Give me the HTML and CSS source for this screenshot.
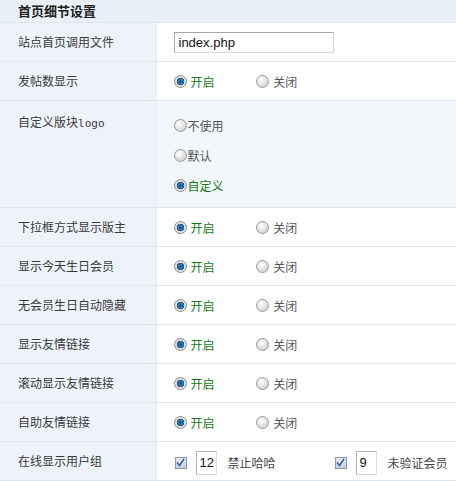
FILE: index.html
```html
<!DOCTYPE html>
<html>
<head>
  <meta charset="UTF-8">
  <title>首页细节设置</title>
  <link rel="stylesheet" href="styles.css">
</head>
<body>

<table class="settings">
  <colgroup>
    <col class="col-label">
    <col>
  </colgroup>
  <tr class="head">
    <th colspan="2">首页细节设置</th>
  </tr>
  <tr>
    <td class="label">站点首页调用文件</td>
    <td class="value"><input type="text" class="txt" value="index.php"></td>
  </tr>
  <tr>
    <td class="label">发帖数显示</td>
    <td class="value">
      <label class="opt on"><span class="radio checked"></span>开启</label>
      <label class="opt"><span class="radio"></span>关闭</label>
    </td>
  </tr>
  <tr class="tall">
    <td class="label top">自定义版块<span class="mono">logo</span></td>
    <td class="value shade">
      <label class="line"><span class="radio"></span>不使用</label>
      <label class="line"><span class="radio"></span>默认</label>
      <label class="line on"><span class="radio checked"></span>自定义</label>
    </td>
  </tr>
  <tr>
    <td class="label">下拉框方式显示版主</td>
    <td class="value">
      <label class="opt on"><span class="radio checked"></span>开启</label>
      <label class="opt"><span class="radio"></span>关闭</label>
    </td>
  </tr>
  <tr>
    <td class="label">显示今天生日会员</td>
    <td class="value">
      <label class="opt on"><span class="radio checked"></span>开启</label>
      <label class="opt"><span class="radio"></span>关闭</label>
    </td>
  </tr>
  <tr>
    <td class="label">无会员生日自动隐藏</td>
    <td class="value">
      <label class="opt on"><span class="radio checked"></span>开启</label>
      <label class="opt"><span class="radio"></span>关闭</label>
    </td>
  </tr>
  <tr>
    <td class="label">显示友情链接</td>
    <td class="value">
      <label class="opt on"><span class="radio checked"></span>开启</label>
      <label class="opt"><span class="radio"></span>关闭</label>
    </td>
  </tr>
  <tr>
    <td class="label">滚动显示友情链接</td>
    <td class="value">
      <label class="opt on"><span class="radio checked"></span>开启</label>
      <label class="opt"><span class="radio"></span>关闭</label>
    </td>
  </tr>
  <tr>
    <td class="label">自助友情链接</td>
    <td class="value">
      <label class="opt on"><span class="radio checked"></span>开启</label>
      <label class="opt"><span class="radio"></span>关闭</label>
    </td>
  </tr>
  <tr>
    <td class="label">在线显示用户组</td>
    <td class="value">
      <div class="groups">
        <span class="group">
          <span class="check">
            <svg width="9" height="9" viewBox="0 0 9 9"><path d="M1 4.5 L3.5 7.5 L8 1" fill="none" stroke="#3c5fa8" stroke-width="1.6"/></svg>
          </span>
          <span class="num">12</span>
          <span class="gname">禁止哈哈</span>
        </span>
        <span class="group">
          <span class="check">
            <svg width="9" height="9" viewBox="0 0 9 9"><path d="M1 4.5 L3.5 7.5 L8 1" fill="none" stroke="#3c5fa8" stroke-width="1.6"/></svg>
          </span>
          <span class="num">9</span>
          <span class="gname">未验证会员</span>
        </span>
      </div>
    </td>
  </tr>
</table>

</body>
</html>
```

FILE: styles.css
```css
body, html {
  margin: 0;
  padding: 0;
  background: #ffffff;
  font-family: "Noto Sans CJK SC", "Liberation Sans", sans-serif;
  font-size: 12px;
  color: #333;
}
.settings {
  width: 456px;
  border-collapse: collapse;
  table-layout: fixed;
}
.col-label {
  width: 156px;
}
.settings td, .settings th {
  padding: 0;
  border-bottom: 1px solid #dfe6ee;
  line-height: 16px;
}
.settings tr {
  height: 39px;
}
.settings tr.head {
  height: 22px;
}
.head th {
  background: #e9f0f8;
  text-align: left;
  padding-left: 18px;
  font-size: 13px;
  font-weight: bold;
  color: #222;
}
.label {
  padding-left: 18px !important;
  background: #eef3f9;
  border-right: 1px solid #e7edf4;
  color: #3a3a3a;
  vertical-align: middle;
}
.label.top {
  vertical-align: top;
  padding-top: 13px !important;
}
.mono {
  font-family: "DejaVu Sans Mono", monospace;
  font-size: 11px;
}
.value {
  padding-left: 17px !important;
  vertical-align: middle;
  overflow: hidden;
}
.value.shade {
  background: #f3f7fc;
  padding-top: 10px !important;
  padding-bottom: 6px !important;
}
.settings tr.tall {
  height: 107px;
}
.txt {
  display: block;
  box-sizing: border-box;
  width: 160px;
  height: 21px;
  margin-top: 1px;
  border: 1px solid #a9a9a9;
  border-right-color: #d8d8d8;
  border-bottom-color: #d8d8d8;
  padding: 1px 4px;
  font-family: "Liberation Sans", sans-serif;
  font-size: 13px;
  color: #111;
}
.opt {
  display: inline-flex;
  align-items: center;
  width: 80px;
  margin-top: 4px;
  color: #555;
}
.opt.on, .line.on {
  color: #137a13;
}
.line {
  display: flex;
  align-items: center;
  height: 30px;
  color: #555;
}
.radio {
  box-sizing: border-box;
  width: 13px;
  height: 13px;
  margin-right: 4px;
  border-radius: 50%;
  border: 1px solid #9a9a9a;
  background: radial-gradient(circle at 40% 35%, #ffffff, #d6d6d6 70%, #b8b8b8);
}
.line .radio {
  margin-right: 1px;
}
.radio.checked {
  border-color: #8a8a8a;
  background: radial-gradient(circle at 50% 50%, #0d4f86 0, #2a7fb8 2.5px, #1c4c78 3.5px, #d9d9d9 4px, #ececec 6px);
}
.groups {
  display: flex;
  margin-top: 4px;
}
.group {
  display: inline-flex;
  flex-shrink: 0;
  align-items: center;
  width: 160px;
}
.group:last-child {
  width: auto;
}
.check {
  box-sizing: border-box;
  width: 12px;
  height: 12px;
  margin: 0 9px 0 1px;
  border: 1px solid #8c97a8;
  background: linear-gradient(#e6e9ef, #c8cfdb);
  display: flex;
  align-items: center;
  justify-content: center;
}
.num {
  box-sizing: border-box;
  width: 21px;
  height: 24px;
  border: 1px solid #b4b4b4;
  border-right-color: #dcdcdc;
  border-bottom-color: #dcdcdc;
  padding-left: 3px;
  line-height: 22px;
  font-family: "Liberation Sans", sans-serif;
  font-size: 13px;
  color: #111;
}
.gname {
  margin-left: 11px;
  color: #444;
}
```
